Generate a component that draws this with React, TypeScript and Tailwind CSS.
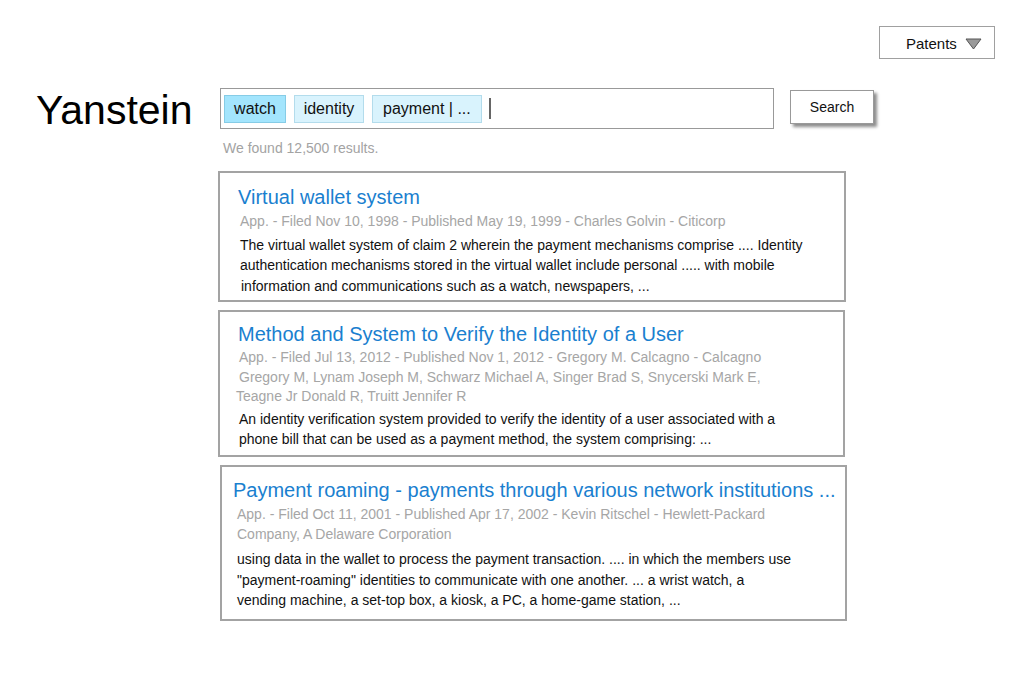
import React from "react";

const font = { fontFamily: '"Liberation Sans", Arial, sans-serif' };

function ResultCard({
  title,
  meta,
  body,
  className,
  titleClass,
  metaClass,
  bodyClass,
  metaShift,
  bodyShift,
}: {
  title: string;
  meta: string[];
  body: string[];
  className: string;
  titleClass: string;
  metaClass: string;
  bodyClass: string;
  metaShift?: number[];
  bodyShift?: number[];
}) {
  return (
    <div className={`border-2 border-[#a3a3a3] bg-white ${className}`}>
      <div className={`text-[20px] leading-[24px] text-[#1a80cf] ${titleClass}`}>{title}</div>
      <div className={`text-[14px] leading-[19.5px] text-[#a6a6a6] ${metaClass}`}>
        {meta.map((m, i) => (
          <div key={i} style={metaShift ? { marginLeft: metaShift[i] } : undefined}>
            {m}
          </div>
        ))}
      </div>
      <div className={`text-[14px] leading-[20.5px] text-[#111] ${bodyClass}`}>
        {body.map((m, i) => (
          <div key={i} style={bodyShift ? { marginLeft: bodyShift[i] } : undefined}>
            {m}
          </div>
        ))}
      </div>
    </div>
  );
}

export default function App() {
  return (
    <div className="w-[1024px] h-[700px] bg-white relative overflow-hidden" style={font}>
      <div className="flex justify-end pt-[26px] pr-[29px]">
        <div className="w-[116px] h-[33px] border border-[#a0a0a0] flex items-center pl-[26px] pt-[3px] gap-[8px]">
          <span className="text-[15px] text-[#111]">Patents</span>
          <svg width="17" height="12" viewBox="0 0 17 12">
            <polygon points="1,1 16,1 8.5,11" fill="#9a9a9a" stroke="#555" strokeWidth="1" strokeLinejoin="round" />
          </svg>
        </div>
      </div>

      <div className="flex items-start mt-[29px]">
        <div className="pl-[36px] w-[220px] pt-[1px] text-[41px] leading-[42px] text-black">Yanstein</div>
        <div className="flex flex-col">
          <div className="w-[554px] h-[41px] border border-[#999] flex items-center pl-[3px] gap-[8px]">
            <div className="h-[28px] w-[62px] flex items-center justify-center bg-[#a3e5fd] border border-[#86cce6] text-[16px] text-[#111]">watch</div>
            <div className="h-[28px] w-[70px] flex items-center justify-center bg-[#d9f3fd] border border-[#b3dcec] text-[16px] text-[#111]">identity</div>
            <div className="h-[28px] w-[110px] pl-[10px] flex items-center bg-[#d9f3fd] border border-[#b3dcec] text-[16px] text-[#111]">payment | ...</div>
            <div className="w-[2px] h-[21px] bg-[#666] -ml-[1px]" />
          </div>
          <div className="mt-[11px] ml-[3px] text-[14px] leading-[16px] text-[#a3a3a3]">We found 12,500 results.</div>
        </div>
        <div className="ml-[16px] mt-[2px] w-[84px] h-[34px] border border-[#999] bg-white flex items-center justify-center text-[14px] text-[#111] shadow-[3px_3px_3px_rgba(0,0,0,0.45)]">
          Search
        </div>
      </div>

      <div className="flex flex-col mt-[15px]">
        <ResultCard
          className="ml-[218px] w-[628px] h-[131px] pt-[12px]"
          titleClass="pl-[18px]"
          metaClass="pl-[20px] mt-[3px]"
          bodyClass="pl-[20px] mt-[3px]"
          bodyShift={[0, 0, 1]}
          title="Virtual wallet system"
          meta={["App. - Filed Nov 10, 1998 - Published May 19, 1999 - Charles Golvin - Citicorp"]}
          body={[
            "The virtual wallet system of claim 2 wherein the payment mechanisms comprise .... Identity",
            "authentication mechanisms stored in the virtual wallet include personal ..... with mobile",
            "information and communications such as a watch, newspapers, ...",
          ]}
        />
        <ResultCard
          className="ml-[218px] mt-[8px] w-[627px] h-[147px] pt-[10px]"
          titleClass="pl-[18px]"
          metaClass="pl-[19px] mt-[2px]"
          bodyClass="pl-[19px] mt-[2px]"
          metaShift={[0, 0, -3]}
          title="Method and System to Verify the Identity of a User"
          meta={[
            "App. - Filed Jul 13, 2012 - Published Nov 1, 2012 - Gregory M. Calcagno - Calcagno",
            "Gregory M, Lynam Joseph M, Schwarz Michael A, Singer Brad S, Snycerski Mark E,",
            "Teagne Jr Donald R, Truitt Jennifer R",
          ]}
          body={[
            "An identity verification system provided to verify the identity of a user associated with a",
            "phone bill that can be used as a payment method, the system comprising: ...",
          ]}
        />
        <ResultCard
          className="ml-[220px] mt-[8px] w-[627px] h-[156px] pt-[11px]"
          titleClass="pl-[11px]"
          metaClass="pl-[15px] mt-[3px]"
          bodyClass="pl-[15px] mt-[5px]"
          title="Payment roaming - payments through various network institutions ..."
          meta={[
            "App. - Filed Oct 11, 2001 - Published Apr 17, 2002 - Kevin Ritschel - Hewlett-Packard",
            "Company, A Delaware Corporation",
          ]}
          body={[
            "using data in the wallet to process the payment transaction. .... in which the members use",
            "\"payment-roaming\" identities to communicate with one another. ... a wrist watch, a",
            "vending machine, a set-top box, a kiosk, a PC, a home-game station, ...",
          ]}
        />
      </div>
    </div>
  );
}
